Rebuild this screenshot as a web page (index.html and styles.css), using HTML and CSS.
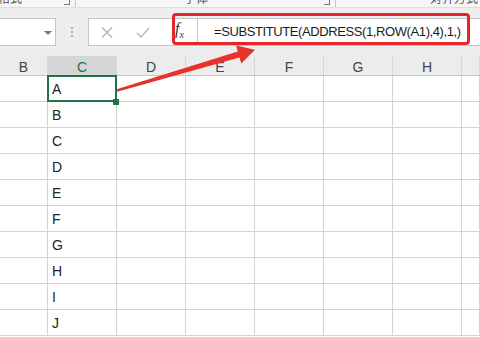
FILE: index.html
```html
<!DOCTYPE html>
<html lang="zh">
<head>
    <meta charset="UTF-8">
    <title>SUBSTITUTE ADDRESS</title>
    <link rel="stylesheet" href="styles.css">
</head>
<body>
    <div class="ribbon-tail">
        <span class="group-label first">格式</span>
        <span class="launcher"></span>
        <span class="group-sep"></span>
        <span class="group-label second">字体</span>
        <span class="launcher far"></span>
        <span class="group-sep"></span>
        <span class="group-label third">对齐方式</span>
    </div>

    <div class="formula-bar">
        <div class="name-box"><span class="drop"></span></div>
        <div class="grip"><i></i><i></i><i></i></div>
        <div class="edit-box">
            <svg class="icon-x" width="12" height="11" viewBox="0 0 12 11">
                <path d="M1 0.5 L11 10.5 M11 0.5 L1 10.5" stroke="#b4b4b4" stroke-width="1.4" fill="none"/>
            </svg>
            <svg class="icon-check" width="14" height="11" viewBox="0 0 14 11">
                <path d="M1 6 L5 10 L13 1" stroke="#bcbcbc" stroke-width="1.6" fill="none"/>
            </svg>
            <span class="fx">f<sub>x</sub></span>
        </div>
        <div class="formula-input">=SUBSTITUTE(ADDRESS(1,ROW(A1),4),1,)</div>
    </div>

    <div class="sheet">
        <div class="col-head">B</div>
        <div class="col-head active">C</div>
        <div class="col-head">D</div>
        <div class="col-head">E</div>
        <div class="col-head">F</div>
        <div class="col-head">G</div>
        <div class="col-head">H</div>
        <div class="col-head"></div>
    </div>
    <div class="sheet" id="rows"></div>

    <div class="callout"></div>
    <svg class="arrow" width="480" height="337" viewBox="0 0 480 337">
        <polygon points="116.7,89.3 237.8,51.6 236.1,45.6 255,49.8 241.3,63.4 239.4,57.4 117.3,91.7" fill="#e8302c"/>
    </svg>

    <script>
        const letters = ["A", "B", "C", "D", "E", "F", "G", "H", "I", "J"];
        const rows = document.getElementById("rows");
        letters.forEach((letter, i) => {
            for (let c = 0; c < 8; c++) {
                const cell = document.createElement("div");
                cell.className = "cell";
                if (c === 1) {
                    cell.innerText = letter;
                    if (i === 0) {
                        cell.classList.add("selected");
                        const handle = document.createElement("span");
                        handle.className = "fill-handle";
                        cell.appendChild(handle);
                    }
                }
                rows.appendChild(cell);
            }
        });
    </script>
</body>
</html>
```

FILE: styles.css
```css
* {
    margin: 0;
    padding: 0;
    box-sizing: border-box;
}

body {
    width: 480px;
    height: 337px;
    overflow: hidden;
    background: #ffffff;
    font-family: "Liberation Sans", Arial, "Noto Sans CJK SC", sans-serif;
    position: relative;
}

/* bottom of the ribbon, labels cut off */
.ribbon-tail {
    height: 8px;
    background: #f6f6f6;
    border-bottom: 1px solid #dedede;
    display: flex;
    overflow: hidden;
}

.group-label {
    font-size: 12px;
    line-height: 12px;
    color: #555;
    margin-top: -7px;
    white-space: nowrap;
}

.group-label.first {
    margin-left: -2px;
}

.group-label.second {
    margin-left: 108px;
    width: 30px;
    overflow: hidden;
}

.group-label.third {
    margin-left: 94px;
}

.launcher {
    width: 6px;
    height: 5px;
    border-right: 1px solid #777;
    border-bottom: 1px solid #777;
    margin-left: 42px;
}

.launcher.far {
    margin-left: 110px;
}

.group-sep {
    width: 1px;
    height: 7px;
    background: #c8c8c8;
    margin-left: 5px;
}

/* formula bar */
.formula-bar {
    height: 48px;
    background: #eeeeee;
    padding-top: 10px;
    display: flex;
    align-items: flex-start;
}

.name-box {
    width: 56px;
    height: 28px;
    background: #fff;
    border: 1px solid #c6c6c6;
    border-left: none;
    position: relative;
}

.drop {
    position: absolute;
    left: 44px;
    top: 12px;
    border-left: 4px solid transparent;
    border-right: 4px solid transparent;
    border-top: 4px solid #777;
}

.grip {
    width: 32px;
    height: 28px;
    display: flex;
    flex-direction: column;
    align-items: center;
    justify-content: center;
    gap: 2px;
}

.grip i {
    width: 2px;
    height: 2px;
    background: #b0b0b0;
}

.edit-box {
    width: 109px;
    height: 28px;
    background: #fff;
    border: 1px solid #c6c6c6;
    border-right: none;
    display: flex;
    align-items: center;
}

.icon-x {
    margin-left: 12px;
}

.icon-check {
    margin-left: 23px;
}

.fx {
    margin-left: 25px;
    font-family: "Liberation Serif", serif;
    font-style: italic;
    font-size: 16px;
    line-height: 16px;
    color: #333;
}

.fx sub {
    font-size: 10px;
}

.formula-input {
    flex: 1;
    height: 28px;
    background: #fff;
    border: 1px solid #c6c6c6;
    border-right: none;
    padding-left: 16px;
    font-size: 13px;
    letter-spacing: -0.4px;
    line-height: 26px;
    color: #1a1a1a;
    white-space: nowrap;
}

/* grid */
.sheet {
    display: grid;
    grid-template-columns: 48px repeat(6, 69px) 1fr;
}

.col-head {
    height: 20px;
    background: #ececec;
    border-right: 1px solid #d6d6d6;
    border-bottom: 1px solid #c6c6c6;
    text-align: center;
    font-size: 14px;
    line-height: 16px;
    padding-top: 3px;
    color: #444;
}

.col-head.active {
    background: #d6d6d6;
    color: #217346;
}

.cell {
    height: 26px;
    border-right: 1px solid #d4d4d4;
    border-bottom: 1px solid #d4d4d4;
    font-size: 14px;
    line-height: 16px;
    padding: 5px 0 0 4px;
    color: #222;
    position: relative;
}

.cell.selected::after {
    content: "";
    position: absolute;
    top: -1px;
    left: -1px;
    right: -1px;
    bottom: -1px;
    border: 2px solid #217346;
}

.fill-handle {
    position: absolute;
    right: -3px;
    bottom: -4px;
    width: 6px;
    height: 6px;
    background: #217346;
    z-index: 1;
}

/* annotations */
.callout {
    position: absolute;
    left: 172px;
    top: 13px;
    width: 298px;
    height: 32px;
    border: 3px solid #e5262a;
    border-radius: 4px;
}

.arrow {
    position: absolute;
    left: 0;
    top: 0;
}
```
